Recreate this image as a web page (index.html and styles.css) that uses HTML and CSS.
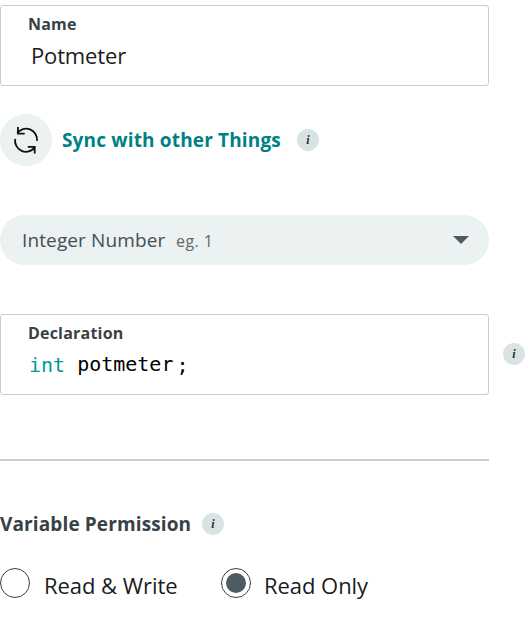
FILE: index.html
```html
<!DOCTYPE html>
<html lang="en">
<head>
<meta charset="utf-8">
<title>Variable</title>
<link rel="stylesheet" href="styles.css">
</head>
<body>
<main class="form">
  <label class="field">
    <span class="field-label name-label">Name</span>
    <span class="field-value">Potmeter</span>
  </label>
  <div class="sync">
    <span class="sync-icon">
      <svg width="26" height="28" viewBox="0 0 26 28" fill="none" stroke="#111" stroke-width="1.8">
        <path d="M2.2 12.8A11 11 0 0 0 21.8 21.4M4.2 7.2A11 11 0 0 1 24 14.9M4.9 1V7.7H11.7M14.8 20.8H21.7V27.5"/>
      </svg>
    </span>
    <span class="sync-text">Sync with other Things</span>
    <span class="info">i</span>
  </div>
  <div class="select">
    <span class="select-value">Integer Number</span>
    <span class="select-hint">eg. 1</span>
    <svg class="caret" width="16" height="8" viewBox="0 0 16 8"><path d="M0 0H16L8 8Z" fill="#4e5b61"/></svg>
  </div>
  <div class="declaration">
    <div class="field">
      <span class="field-label">Declaration</span>
      <code class="code"><span class="type">int</span><span class="variable">potmeter</span><span class="semi">;</span></code>
    </div>
    <span class="info">i</span>
  </div>
  <hr class="divider">
  <div class="permission">
    <span class="permission-title">Variable Permission</span>
    <span class="info">i</span>
  </div>
  <div class="options">
    <span class="radio"></span><span class="option write">Read &amp; Write</span>
    <span class="radio checked"></span><span class="option only">Read Only</span>
  </div>
</main>
</body>
</html>
```
FILE: styles.css
```css
* { box-sizing: border-box; }
body {
  margin: 0;
  background: #fff;
  color: #111;
  font-family: "Open Sans", "Noto Sans", sans-serif;
}
.form { width: 527px; padding-top: 5px; white-space: nowrap; }
.field {
  display: flex;
  flex-direction: column;
  width: 489px;
  height: 81px;
  padding: 7px 27px 0;
  border: 1px solid #c6d0d1;
  border-radius: 3px;
}
.field-label {
  font-size: 16px;
  line-height: 22px;
  font-weight: 700;
  letter-spacing: 0.2px;
  color: #374146;
}
.field-value {
  margin: 2px 0 0 3px;
  font-size: 22px;
  line-height: 36px;
  font-weight: 400;
  letter-spacing: -0.15px;
  color: #1c1c1c;
}
.sync { display: flex; align-items: center; height: 52px; margin-top: 28px; }
.sync-icon {
  display: flex;
  align-items: center;
  justify-content: center;
  width: 52px;
  height: 52px;
  border-radius: 50%;
  background: #ecf1f1;
}
.sync-text {
  width: 219px;
  margin: 0 16px 0 10px;
  font-size: 19px;
  line-height: 28px;
  font-weight: 700;
  letter-spacing: 0.16px;
  color: #008184;
}
.info {
  flex: none;
  width: 22px;
  height: 22px;
  border-radius: 50%;
  background: #dae3e3;
  color: #263034;
  font: italic 700 12px/22px "Liberation Serif", serif;
  text-align: center;
}
.select {
  display: flex;
  align-items: center;
  width: 489px;
  height: 50px;
  margin-top: 49px;
  padding: 0 20px 0 22px;
  border-radius: 25px;
  background: #ecf1f1;
}
.select-value { width: 144px; font-size: 19px; letter-spacing: 0.12px; color: #434f54; }
.select-hint { margin: 2px 0 0 10px; font-size: 16px; letter-spacing: 0.4px; color: #5d6a6e; }
.caret { margin-left: auto; }
.declaration { display: flex; align-items: center; gap: 14px; margin-top: 49px; }
.declaration .info { margin-bottom: 2px; }
.code {
  display: flex;
  margin: 9px 0 0 1px;
  font: 20px/24px "DejaVu Sans Mono", monospace;
  color: #000;
}
.type { color: #00979d; }
.variable { margin: -1px 0 0 12px; }
.semi { margin-left: 3px; }
.divider { width: 489px; height: 2px; margin: 64px 0 0; border: 0; background: #c6d0d1; }
.permission { display: flex; align-items: center; height: 28px; margin-top: 49px; }
.permission-title {
  width: 192px;
  margin-right: 10px;
  font-size: 19px;
  line-height: 28px;
  font-weight: 700;
  letter-spacing: 0.12px;
  color: #374146;
}
.options { display: flex; align-items: flex-start; margin-top: 30px; }
.radio {
  flex: none;
  width: 30px;
  height: 30px;
  border: 1px solid #374146;
  border-radius: 50%;
}
.checked { padding: 4px; background: #4e5b61 content-box; }
.option { margin: 2px 0 0 14px; font-size: 22px; line-height: 30px; font-weight: 400; letter-spacing: -0.05px; color: #1c1c1c; }
.write { width: 177px; }
.only { margin-left: 13px; }
```
